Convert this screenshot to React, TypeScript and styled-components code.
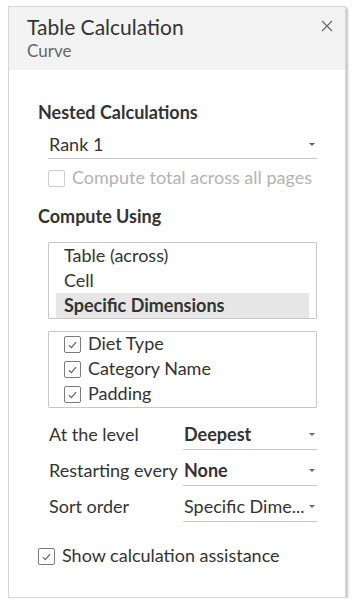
import React from "react";
import styled, { createGlobalStyle } from "styled-components";

const Global = createGlobalStyle`
  html, body { margin: 0; padding: 0; background: #fff; }
  body { font-family: Lato, "Liberation Sans", sans-serif; color: #333; }
`;

const Page = styled.div`
  padding: 6px 0 0 8px;
`;

const Panel = styled.div`
  width: 338px;
  height: 592px;
  box-sizing: border-box;
  border: 1px solid #d6d6d6;
  background: #fff;
  box-shadow: 2px 2px 2px rgba(0, 0, 0, 0.22);
  display: flex;
  flex-direction: column;
`;

const Header = styled.div`
  position: relative;
  height: 63px;
  box-sizing: border-box;
  background: #f3f3f3;
  padding: 7px 18px 0 18px;
`;

const Title = styled.div`
  font-size: 21px;
  line-height: 26px;
  color: #333;
`;

const Subtitle = styled.div`
  font-size: 17px;
  line-height: 20px;
  margin-top: 1px;
  color: #666;
`;

const Close = styled.button`
  position: absolute;
  right: 12px;
  top: 13px;
  width: 12px;
  height: 12px;
  padding: 0;
  border: none;
  background: transparent;
  display: flex;
`;

const Body = styled.div`
  padding: 31px 29px 0 29px;
  display: flex;
  flex-direction: column;
`;

const Heading = styled.div<{ $top?: number }>`
  font-size: 18px;
  font-weight: 700;
  line-height: 22px;
  margin-top: ${(p) => p.$top ?? 0}px;
`;

const Indent = styled.div`
  padding-left: 10px;
  width: 269px;
`;

const Dropdown = styled.div<{ $bold?: boolean; $width?: number; $pt?: number; $top?: number }>`
  display: flex;
  align-items: flex-start;
  justify-content: space-between;
  box-sizing: border-box;
  width: ${(p) => p.$width ?? 269}px;
  height: 36px;
  margin-top: ${(p) => p.$top ?? 0}px;
  padding: ${(p) => p.$pt ?? 9}px 2px 0 1px;
  border-bottom: 1px solid #c8c8c8;
  font-size: 18px;
  line-height: 22px;
  font-weight: ${(p) => (p.$bold ? 700 : 400)};
  color: #333;
  white-space: nowrap;
`;

const DropText = styled.span`
  overflow: hidden;
  text-overflow: ellipsis;
  min-width: 0;
`;

const Arrow = styled.span`
  flex: none;
  width: 0;
  height: 0;
  margin-top: 10px;
  margin-left: 2px;
  border-left: 3px solid transparent;
  border-right: 3px solid transparent;
  border-top: 3px solid #666;
`;

const CheckRow = styled.label<{ $disabled?: boolean; $top?: number; $indent?: number }>`
  display: flex;
  align-items: center;
  gap: 7px;
  height: 25px;
  margin-top: ${(p) => p.$top ?? 0}px;
  padding-left: ${(p) => p.$indent ?? 0}px;
  font-size: 18px;
  line-height: 22px;
  color: ${(p) => (p.$disabled ? "#b3b3b3" : "#333")};
`;

const CheckText = styled.span`
  margin-bottom: 3px;
  white-space: nowrap;
`;

const Box = styled.span<{ $disabled?: boolean }>`
  width: 17px;
  height: 17px;
  box-sizing: border-box;
  border: 1px solid ${(p) => (p.$disabled ? "#cfcfcf" : "#7a7a7a")};
  border-radius: 2px;
  display: flex;
  align-items: center;
  justify-content: center;
  flex: none;
`;

const ListBox = styled.div<{ $top: number }>`
  margin-top: ${(p) => p.$top}px;
  width: 269px;
  box-sizing: border-box;
  border: 1px solid #c8c8c8;
  border-radius: 1px;
  padding: 0 7px;
  display: flex;
  flex-direction: column;
`;

const ListItem = styled.div<{ $selected?: boolean }>`
  height: 25px;
  padding-left: 8px;
  font-size: 18px;
  line-height: 24px;
  font-weight: ${(p) => (p.$selected ? 700 : 400)};
  background: ${(p) => (p.$selected ? "#e6e6e6" : "transparent")};
`;

const FieldRow = styled.div<{ $top?: number }>`
  display: flex;
  align-items: flex-start;
  margin-top: ${(p) => p.$top ?? 0}px;
`;

const FieldLabel = styled.div`
  width: 135px;
  padding: 9px 0 0 1px;
  box-sizing: border-box;
  font-size: 18px;
  line-height: 22px;
  white-space: nowrap;
`;

const Check = () => (
  <svg width="9" height="8" viewBox="0 0 9 8">
    <path d="M1 4.3 L3.4 6.6 L8 1.2" fill="none" stroke="#666" strokeWidth="1.3" />
  </svg>
);

const CheckBox = ({ checked, disabled }: { checked?: boolean; disabled?: boolean }) => (
  <Box $disabled={disabled}>{checked && <Check />}</Box>
);

export default function App() {
  return (
    <>
      <Global />
      <Page>
        <Panel>
          <Header>
            <Title>Table Calculation</Title>
            <Subtitle>Curve</Subtitle>
            <Close aria-label="close">
              <svg width="12" height="12" viewBox="0 0 12 12">
                <path d="M1 1 L11 11 M11 1 L1 11" stroke="#666" strokeWidth="1.2" />
              </svg>
            </Close>
          </Header>
          <Body>
            <Heading>Nested Calculations</Heading>
            <Indent>
              <Dropdown $top={0} $pt={10}>
                <DropText>Rank 1</DropText>
                <Arrow />
              </Dropdown>
              <CheckRow $disabled $top={7}>
                <CheckBox disabled />
                <CheckText>Compute total across all pages</CheckText>
              </CheckRow>
            </Indent>
            <Heading $top={14}>Compute Using</Heading>
            <Indent>
              <ListBox $top={15}>
                <ListItem>Table (across)</ListItem>
                <ListItem>Cell</ListItem>
                <ListItem $selected>Specific Dimensions</ListItem>
              </ListBox>
              <ListBox $top={12}>
                <CheckRow $indent={8}>
                  <CheckBox checked />
                  <CheckText>Diet Type</CheckText>
                </CheckRow>
                <CheckRow $indent={8}>
                  <CheckBox checked />
                  <CheckText>Category Name</CheckText>
                </CheckRow>
                <CheckRow $indent={8}>
                  <CheckBox checked />
                  <CheckText>Padding</CheckText>
                </CheckRow>
              </ListBox>
              <FieldRow $top={6}>
                <FieldLabel>At the level</FieldLabel>
                <Dropdown $bold $width={134}>
                  <DropText>Deepest</DropText>
                  <Arrow />
                </Dropdown>
              </FieldRow>
              <FieldRow>
                <FieldLabel>Restarting every</FieldLabel>
                <Dropdown $bold $width={134}>
                  <DropText>None</DropText>
                  <Arrow />
                </Dropdown>
              </FieldRow>
              <FieldRow>
                <FieldLabel>Sort order</FieldLabel>
                <Dropdown $width={134}>
                  <DropText>Specific Dime...</DropText>
                  <Arrow />
                </Dropdown>
              </FieldRow>
            </Indent>
            <CheckRow $top={22}>
              <CheckBox checked />
              <CheckText>Show calculation assistance</CheckText>
            </CheckRow>
          </Body>
        </Panel>
      </Page>
    </>
  );
}
